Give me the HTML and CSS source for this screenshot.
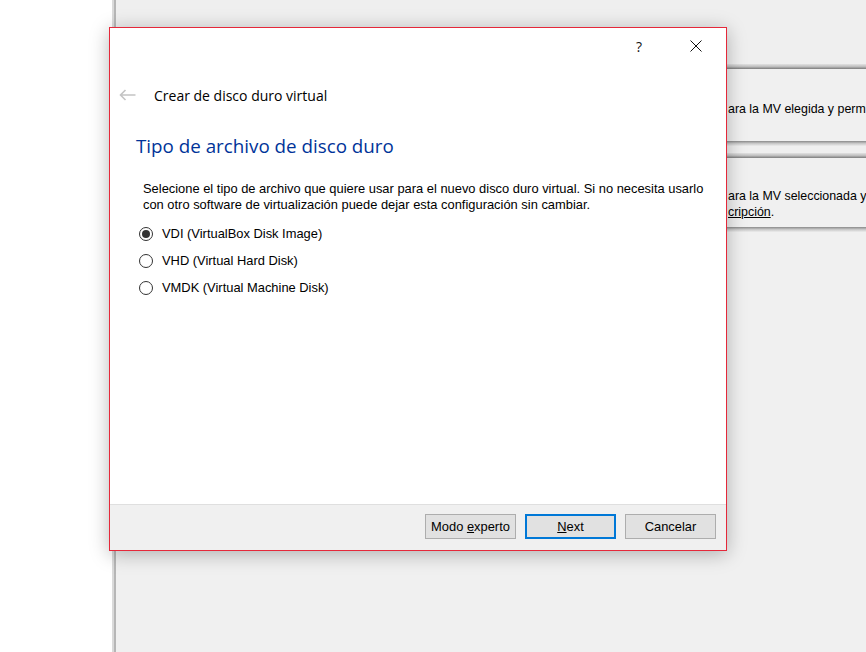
FILE: index.html
```html
<!DOCTYPE html>
<html lang="es">
<head>
<meta charset="utf-8">
<title>Crear de disco duro virtual</title>
<link rel="stylesheet" href="styles.css">
</head>
<body>
<div class="desk">
  <div class="left"></div>
  <div class="vsep"></div>
  <div class="main">
    <div class="top"></div>
    <div class="edge-dn"></div>
    <div class="pane p1"><p>ara la MV elegida y perm</p></div>
    <div class="edge-up"></div>
    <div class="gap"></div>
    <div class="edge-dn"></div>
    <div class="pane p2"><p>ara la MV seleccionada y<br><u>cripción</u>.</p></div>
    <div class="edge-up"></div>
  </div>

  <div class="dialog">
    <div class="dlg-body">
      <div class="titlebar">
        <span class="cap-btn help">?</span>
        <span class="cap-btn close">
          <svg width="12" height="12" viewBox="0 0 12 12"><path d="M0.5 0.5 L11.5 11.5 M11.5 0.5 L0.5 11.5" stroke="#111" stroke-width="1" fill="none"/></svg>
        </span>
      </div>
      <div class="header">
        <svg class="back" width="17" height="12" viewBox="0 0 17 12"><path d="M1.5 6 H16.5 M6.5 1 L1.5 6 L6.5 11" stroke="#c4c4c4" stroke-width="1.6" fill="none"/></svg>
        <span class="hdr-title">Crear de disco duro virtual</span>
      </div>
      <h1 class="instr">Tipo de archivo de disco duro</h1>
      <p class="desc">Selecione el tipo de archivo que quiere usar para el nuevo disco duro virtual. Si no necesita usarlo<br>con otro software de virtualización puede dejar esta configuración sin cambiar.</p>
      <div class="radios">
        <div class="radio-row"><span class="radio checked"></span><span>VDI (VirtualBox Disk Image)</span></div>
        <div class="radio-row"><span class="radio"></span><span>VHD (Virtual Hard Disk)</span></div>
        <div class="radio-row"><span class="radio"></span><span>VMDK (Virtual Machine Disk)</span></div>
      </div>
    </div>
    <div class="footer">
      <button class="btn">Modo <u>e</u>xperto</button>
      <button class="btn default"><u>N</u>ext</button>
      <button class="btn">Cancelar</button>
    </div>
  </div>
</div>
</body>
</html>
```

FILE: styles.css
```css
* { box-sizing: border-box; }
html, body { margin: 0; padding: 0; }
body {
  width: 866px;
  height: 652px;
  overflow: hidden;
  font-family: "Liberation Sans", Arial, sans-serif;
  font-size: 12.9px;
  color: #000;
}
.desk {
  position: relative;
  display: flex;
  width: 866px;
  height: 652px;
  overflow: hidden;
}
.left { width: 112px; flex-shrink: 0; background: #fff; }
.vsep {
  width: 4px;
  flex-shrink: 0;
  background: linear-gradient(to right, #dadada 0 2px, #b6b6b6 2px 4px);
}
.main {
  flex: 1;
  min-width: 0;
  display: flex;
  flex-direction: column;
  background: #f0f0f0;
}
.top { height: 64px; background: #efefef; }
.edge-dn {
  height: 5px;
  background: linear-gradient(to bottom, #e2e2e2, #c0c0c0 50%, #7c7c7c);
}
.edge-up {
  height: 5px;
  background: linear-gradient(to bottom, #8a8a8a, #c8c8c8 50%, #ececec);
}
.gap { height: 7px; background: #efefef; }
.pane {
  background: #f0f0f0;
  overflow: hidden;
  white-space: nowrap;
  padding-left: 612px;
  font-size: 12.4px;
}
.pane p { margin: 0; line-height: 16px; }
.p1 { height: 72px; padding-top: 32px; }
.p2 { height: 69px; padding-top: 30px; }

.dialog {
  position: absolute;
  left: 109px;
  top: 27px;
  width: 618px;
  height: 524px;
  border: 1px solid #e5283a;
  background: #fff;
  display: flex;
  flex-direction: column;
  box-shadow: 0 3px 18px rgba(0,0,0,0.28);
}
.dlg-body { flex: 1; display: flex; flex-direction: column; }
.titlebar {
  height: 36px;
  display: flex;
  justify-content: flex-end;
  align-items: center;
  padding-right: 7px;
  gap: 11px;
}
.cap-btn {
  width: 46px;
  height: 36px;
  display: flex;
  align-items: center;
  justify-content: center;
  font-family: "Open Sans", "Noto Sans", sans-serif;
  font-size: 14px;
  color: #111;
}
.header {
  height: 30px;
  margin-top: 16px;
  display: flex;
  align-items: center;
  padding-left: 9px;
}
.back { display: block; }
.hdr-title {
  margin-left: 18px;
  font-family: "Open Sans", "Noto Sans", sans-serif;
  font-size: 14px;
  color: #000;
}
.instr {
  margin: 22px 0 0 26px;
  height: 28px;
  line-height: 28px;
  font-family: "Open Sans", "Noto Sans", sans-serif;
  font-weight: normal;
  font-size: 18.8px;
  color: #003399;
}
.desc {
  margin: 21px 0 0 33px;
  line-height: 16px;
  white-space: nowrap;
}
.radios {
  margin: 7px 0 0 29px;
  display: flex;
  flex-direction: column;
}
.radio-row {
  height: 27px;
  display: flex;
  align-items: center;
}
.radio {
  width: 14px;
  height: 14px;
  border: 1px solid #333;
  border-radius: 50%;
  margin-right: 9px;
  display: flex;
  align-items: center;
  justify-content: center;
  background: #fff;
}
.radio.checked::after {
  content: "";
  width: 8px;
  height: 8px;
  border-radius: 50%;
  background: #333;
}
.footer {
  height: 46px;
  border-top: 1px solid #dfdfdf;
  background: #f0f0f0;
  display: flex;
  justify-content: flex-end;
  align-items: flex-start;
  padding: 9px 10px 0 0;
  gap: 9px;
}
.btn {
  width: 91px;
  height: 25px;
  border: 1px solid #adadad;
  background: #e1e1e1;
  font-family: "Liberation Sans", Arial, sans-serif;
  font-size: 12.9px;
  color: #000;
  padding: 0;
}
.btn.default { border: 2px solid #0078d7; }
```
